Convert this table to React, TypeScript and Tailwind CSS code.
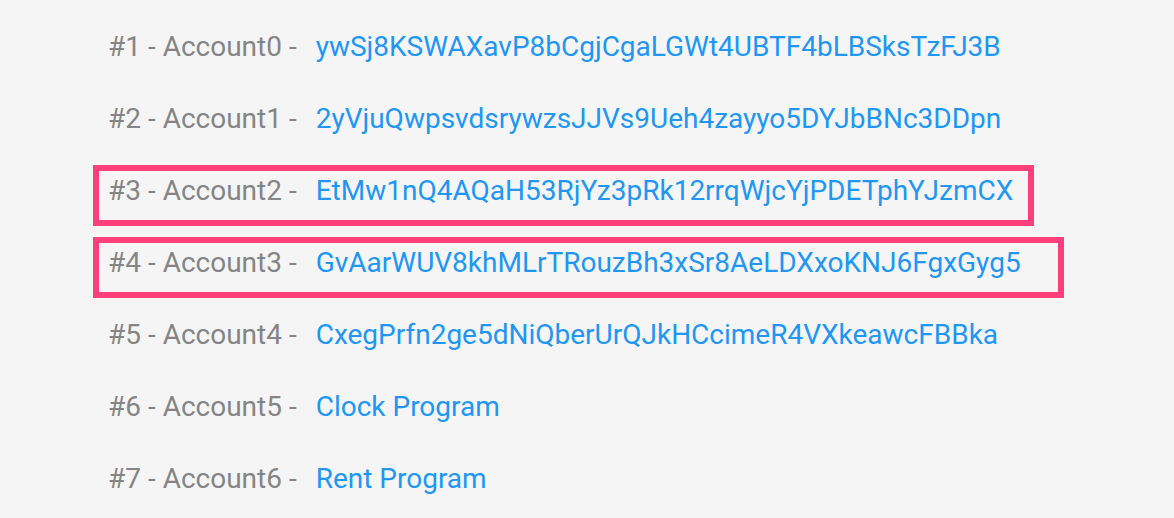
const accounts = [
  { label: "Account0", value: "ywSj8KSWAXavP8bCgjCgaLGWt4UBTF4bLBSksTzFJ3B", marked: false, pad: "pr-[15px]" },
  { label: "Account1", value: "2yVjuQwpsvdsrywzsJJVs9Ueh4zayyo5DYJbBNc3DDpn", marked: false, pad: "pr-[15px]" },
  { label: "Account2", value: "EtMw1nQ4AQaH53RjYz3pRk12rrqWjcYjPDETphYJzmCX", marked: true, pad: "pr-[15px]" },
  { label: "Account3", value: "GvAarWUV8khMLrTRouzBh3xSr8AeLDXxoKNJ6FgxGyg5", marked: true, pad: "pr-[37px]" },
  { label: "Account4", value: "CxegPrfn2ge5dNiQberUrQJkHCcimeR4VXkeawcFBBka", marked: false, pad: "pr-[15px]" },
  { label: "Account5", value: "Clock Program", marked: false, pad: "pr-[15px]" },
  { label: "Account6", value: "Rent Program", marked: false, pad: "pr-[15px]" },
];

export default function App() {
  return (
    <div className="min-h-screen bg-[#f5f5f5] pt-[11px] pl-[93px] font-['Roboto',sans-serif]">
      {accounts.map((acc, i) => (
        <div key={acc.label} className="h-[72px] pt-[10px]">
          <div
            className={`h-[61px] w-fit border-[6px] pt-[4px] pl-[9px] ${acc.pad} ${acc.marked ? "border-[#fd3f7c]" : "border-transparent"}`}
          >
            <div className="flex items-center text-[28px] leading-[32px]">
              <span className="text-[#858585]">
                #{i + 1} - {acc.label} -
              </span>
              <a href="#" className="ml-[19px] text-[#2196f3]">
                {acc.value}
              </a>
            </div>
          </div>
        </div>
      ))}
    </div>
  );
}
